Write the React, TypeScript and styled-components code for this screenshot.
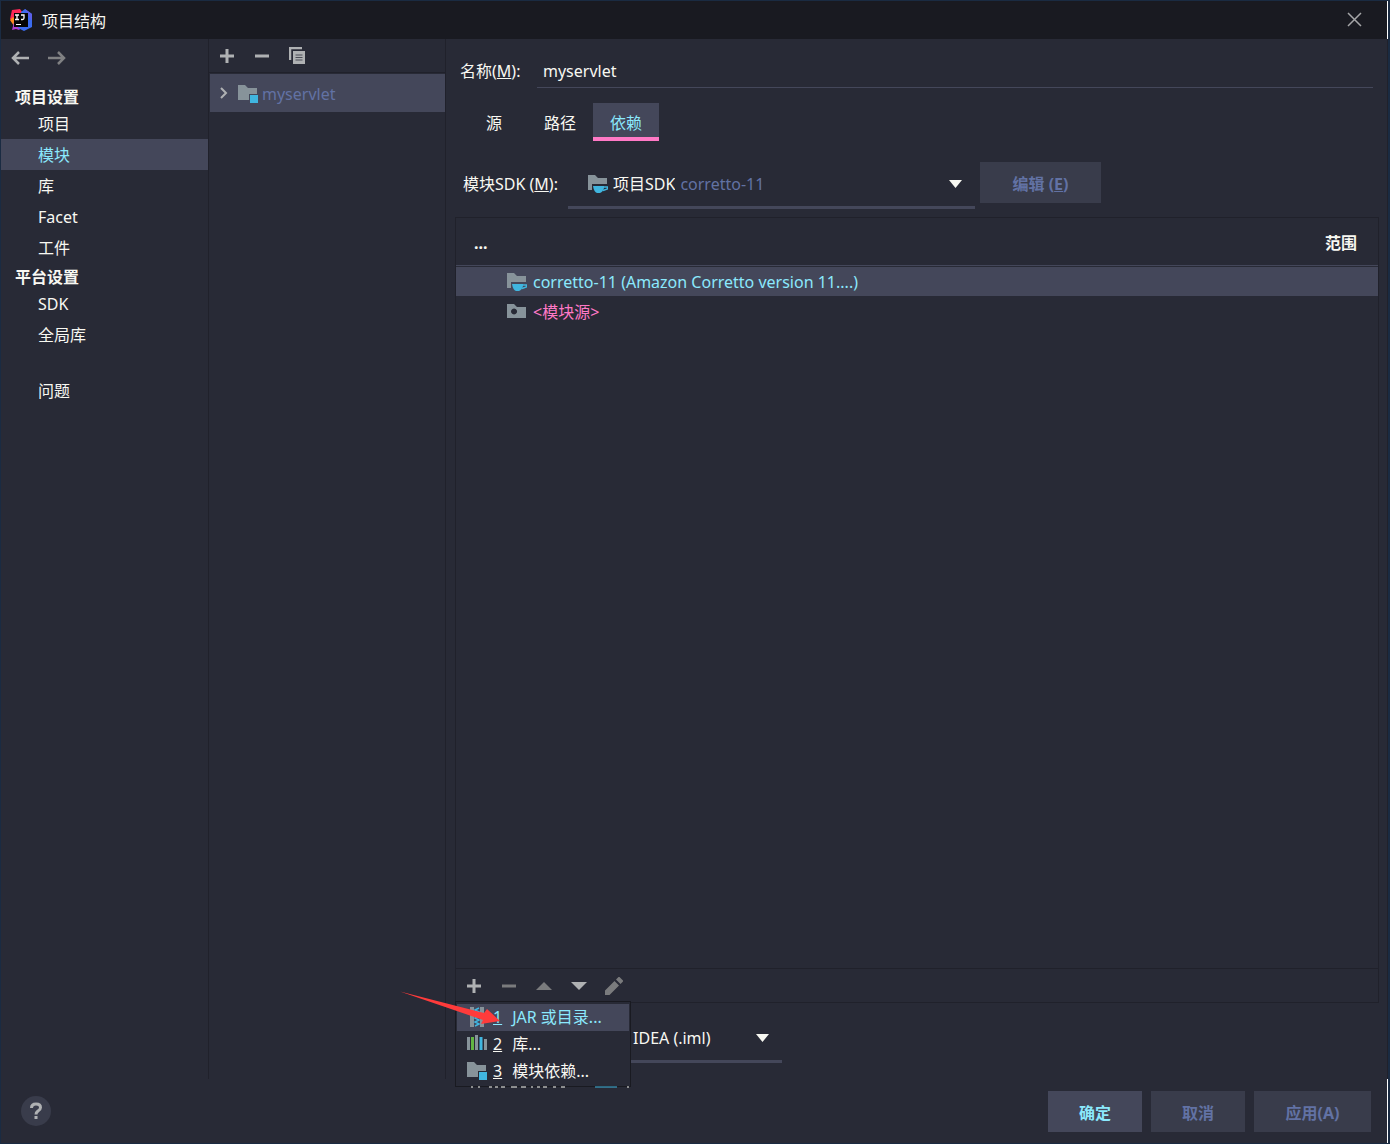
import React from 'react';
import styled, { createGlobalStyle, css } from 'styled-components';

const c = {
  bg: '#282a36',
  title: '#191a21',
  select: '#44475a',
  line: '#20212b',
  fg: '#f8f8f2',
  cyan: '#8be9fd',
  pink: '#ff79c6',
  muted: '#6272a4',
  button: '#393c4b',
  icon: '#afb1b3',
  iconOff: '#7a7b7d',
  folder: '#87939a',
  blue: '#40b6e0',
  edge: '#1a2b42',
};

const GlobalStyle = createGlobalStyle`
  *, *::before, *::after { box-sizing: border-box; }
  body { margin: 0; background: ${c.bg}; }
  body, button, input, select {
    font-family: "Noto Sans", "Noto Sans CJK SC", sans-serif;
    font-size: 16px;
    line-height: 24px;
    color: ${c.fg};
  }
`;

const plainButton = css`
  border: 0;
  padding: 0;
  background: none;
  cursor: pointer;
`;

const Window = styled.div`
  display: flex;
  flex-direction: column;
  min-height: 100vh;
  border: 1px solid ${c.edge};
  border-right-width: 2px;
`;

const TitleBar = styled.header`
  display: flex;
  align-items: center;
  height: 38px;
  padding: 0 22px 0 8px;
  gap: 9px;
  background: ${c.title};
  border-right: 1px solid #fff;
`;

const Title = styled.h1`
  flex: 1;
  margin: 0;
  padding-top: 2px;
  font-size: 16px;
  font-weight: 400;
`;

const CloseButton = styled.button`
  ${plainButton}
  display: flex;
`;

const Body = styled.div`
  display: flex;
  flex: 1;
  border-right: 1px solid ${c.line};
`;

const Sidebar = styled.nav`
  width: 208px;
  border-right: 1px solid ${c.line};
`;

const History = styled.div`
  display: flex;
  gap: 17px;
  height: 44px;
  padding: 9px 0 0 9px;
`;

const HistoryButton = styled.button`
  ${plainButton}
  width: 20px;
  height: 20px;
`;

const NavHeading = styled.h2`
  height: 25px;
  margin: 0;
  padding: 2px 0 0 14px;
  font-size: 16px;
  line-height: 24px;
  font-weight: 700;
`;

const NavList = styled.ul<{ $spaced?: boolean }>`
  list-style: none;
  margin: ${(p) => (p.$spaced ? '25px 0 0' : '0')};
  padding: 0;
`;

const NavLink = styled.a<{ $active?: boolean }>`
  display: block;
  height: 31px;
  padding-left: 37px;
  line-height: 33px;
  text-decoration: none;
  color: ${(p) => (p.$active ? c.cyan : c.fg)};
  background: ${(p) => (p.$active ? c.select : 'none')};
`;

const Modules = styled.section`
  width: 237px;
  border-right: 1px solid ${c.line};
`;

const Toolbar = styled.div<{ $bottom?: boolean }>`
  position: relative;
  display: flex;
  height: 34px;
  border: 0 solid ${c.line};
  border-width: ${(p) => (p.$bottom ? '1px 0 0' : '0 0 1px')};
`;

const ToolButton = styled.button`
  ${plainButton}
  display: flex;
  align-items: center;
  justify-content: center;
  width: 35px;
`;

const ModuleRow = styled.button`
  ${plainButton}
  display: flex;
  align-items: center;
  width: 100%;
  height: 40px;
  padding: 2px 0 0 10px;
  border: 1px solid ${c.bg};
  border-right: 0;
  background: ${c.select};
  color: ${c.muted};
  svg { margin-bottom: 2px; }
  svg + svg { margin: 0 4px 0 10px; }
`;

const Main = styled.main`
  display: flex;
  flex: 1;
  flex-direction: column;
  min-width: 0;
  padding: 15px 8px 16px 9px;
`;

const NameRow = styled.div`
  display: flex;
  height: 34px;
  padding: 0 6px 0 5px;
`;

const Label = styled.label<{ $width: number }>`
  width: ${(p) => p.$width}px;
  flex-shrink: 0;
  line-height: 34px;
  white-space: nowrap;
`;

const NameInput = styled.input`
  flex: 1;
  min-width: 0;
  padding: 0 6px;
  border: 0;
  border-bottom: 1px solid ${c.select};
  background: none;
  outline: none;
`;

const Tabs = styled.div`
  display: flex;
  margin-top: 15px;
  padding-left: 6px;
`;

const Tab = styled.button<{ $active?: boolean }>`
  ${plainButton}
  width: 66px;
  height: 38px;
  padding-top: 5px;
  border-bottom: 4px solid ${(p) => (p.$active ? c.pink : 'transparent')};
  color: ${(p) => (p.$active ? c.cyan : c.fg)};
  background: ${(p) => (p.$active ? c.select : 'none')};
`;

const FieldRow = styled.div<{ $top: number; $indent: number }>`
  display: flex;
  align-items: flex-start;
  margin-top: ${(p) => p.$top}px;
  padding-left: ${(p) => p.$indent}px;
  ${Label} { line-height: 44px; }
`;

const Combo = styled.div<{ $width: number }>`
  display: flex;
  align-items: center;
  width: ${(p) => p.$width}px;
  height: 47px;
  padding: 0 13px 0 20px;
  border-bottom: 3px solid ${c.select};
`;

const ComboSelect = styled.select<{ $grow?: boolean }>`
  appearance: none;
  field-sizing: content;
  flex: ${(p) => (p.$grow ? '1' : '0 0 auto')};
  min-width: 0;
  margin: 0;
  padding: 0;
  border: 0;
  background: none;
  outline: none;
`;

const ComboNote = styled.span`
  flex: 1;
  padding-left: 5px;
  color: ${c.muted};
`;

const Button = styled.button<{ $primary?: boolean; $width: number }>`
  ${plainButton}
  width: ${(p) => p.$width}px;
  height: 41px;
  padding-top: 3px;
  font-weight: 700;
  color: ${(p) => (p.$primary ? c.cyan : c.muted)};
  background: ${(p) => (p.$primary ? c.select : c.button)};
`;

const FieldGap = styled.div`
  width: 5px;
`;

const Panel = styled.div`
  display: flex;
  flex: 1;
  flex-direction: column;
  margin-top: 8px;
  border: 1px solid ${c.line};
`;

const TableArea = styled.div`
  flex: 1;
`;

const Table = styled.table`
  width: 100%;
  border-collapse: separate;
  border-spacing: 0;
  text-align: left;
`;

const Th = styled.th<{ $end?: boolean }>`
  height: 48px;
  padding: ${(p) => (p.$end ? '3px 21px 0 0' : '3px 0 0 18px')};
  text-align: ${(p) => (p.$end ? 'right' : 'left')};
  border-bottom: 1px solid ${c.select};
`;

const Row = styled.tr<{ $selected?: boolean; $color: string }>`
  color: ${(p) => p.$color};
  td {
    height: 30px;
    padding: 0;
    border-top: 1px solid ${c.bg};
    background: ${(p) => (p.$selected ? c.select : 'none')};
    background-clip: padding-box;
  }
`;

const Cell = styled.div`
  display: flex;
  align-items: center;
  gap: 6px;
  padding-left: 51px;
`;

const Menu = styled.ul`
  position: absolute;
  top: 32px;
  left: -1px;
  z-index: 2;
  width: 176px;
  margin: 0;
  padding: 2px 1px 1px;
  list-style: none;
  border: 1px solid ${c.title};
  background: ${c.bg};
`;

const MenuItem = styled.button<{ $active?: boolean }>`
  ${plainButton}
  display: flex;
  align-items: center;
  width: 100%;
  height: 27px;
  padding: 0 0 1px 10px;
  color: ${(p) => (p.$active ? c.cyan : c.fg)};
  background: ${(p) => (p.$active ? c.select : 'none')};
  u { margin: 0 10px 0 6px; }
`;

const Peek = styled.svg`
  position: absolute;
  top: 100%;
  left: 15px;
`;

const Arrow = styled.svg`
  position: absolute;
  top: 21px;
  left: -57px;
  z-index: 3;
  pointer-events: none;
`;

const Footer = styled.footer`
  display: flex;
  align-items: center;
  gap: 9px;
  height: 64px;
  padding: 0 16px 0 20px;
  border-right: 1px solid #fff;
`;

const HelpButton = styled.button`
  ${plainButton}
  width: 30px;
  height: 30px;
  margin-right: auto;
  border-radius: 50%;
  background: ${c.button};
  svg { display: block; }
`;

const Logo = () => (
  <svg width="24" height="24" viewBox="0 0 24 24">
    <path d="M3 2l8-1 5 7-9 7-6-4z" fill="#fe2857" />
    <path d="M1 12l3-3 4 4-3 5z" fill="#ff8a1d" />
    <path d="M3 22l2-8 8 5-3 3-3-1z" fill="#af3fd1" />
    <path d="M12 4l4-3 7 5v13l-8 4-6-3z" fill="#3b6cf0" />
    <path d="M16 1l7 5v7l-5-7z" fill="#5b5fe8" />
    <path d="M5 5h14v14H5z" fill="#050505" />
    <path d="M6 7h4M8 7v5M6 11.500h4M12 7h3v3q0 1.500-1.500 1.500H12" stroke="#fff" strokeWidth="1.300" fill="none" />
    <path d="M7 16.500h5" stroke="#fff" strokeWidth="1" />
  </svg>
);

const ArrowIcon = ({ back }: { back?: boolean }) => (
  <svg width="20" height="20" viewBox="0 0 20 20" fill="none" strokeWidth="2.500" stroke={back ? c.icon : '#808183'}>
    <path d={back ? 'M19 10H3M9 4l-6 6 6 6' : 'M1 10h16M11 4l6 6-6 6'} />
  </svg>
);

const PlusIcon = () => (
  <svg width="14" height="14" viewBox="0 0 14 14" stroke={c.icon} strokeWidth="3">
    <path d="M7 0v14M0 7h14" />
  </svg>
);

const MinusIcon = ({ off }: { off?: boolean }) => (
  <svg width="14" height="14" viewBox="0 0 14 14" stroke={off ? c.iconOff : c.icon} strokeWidth="3">
    <path d="M0 7h14" />
  </svg>
);

const CopyIcon = () => (
  <svg width="16" height="18" viewBox="0 0 16 18">
    <path d="M13 1H1v12" stroke={c.icon} strokeWidth="2.500" fill="none" />
    <path d="M4 4h12v13H4z" fill={c.icon} />
    <path d="M6.500 8h7M6.500 10.500h7M6.500 13h7" stroke="#4b4d57" strokeWidth="1" />
  </svg>
);

type Badge = 'module' | 'cup' | 'dot';

const FolderIcon = ({ badge }: { badge: Badge }) => (
  <svg width="20" height="20" viewBox="0 0 20 20">
    {badge === 'dot' ? (
      <path fillRule="evenodd" d="M0 2h7l3 3h9v11H0zM7 6.500a3 3 0 1 0 .1 0z" fill={c.folder} />
    ) : (
      <path d={badge === 'cup' ? 'M0 1h7l3 3h9v6H4v6H0z' : 'M0 1h7l3 3h9v6h-8v6H0z'} fill={c.folder} />
    )}
    {badge === 'module' && <path d="M12 11h8v8h-8z" fill={c.blue} />}
    {badge === 'cup' && (
      <>
        <path d="M5 12h11v2q-1 4-4 5H9Q6 18 5 12z" fill={c.blue} />
        <path d="M16 13h3.500v2L15 16.500" stroke={c.blue} strokeWidth="1.500" fill="none" />
      </>
    )}
  </svg>
);

const Caret = ({ size = 13, up, color = c.fg }: { size?: number; up?: boolean; color?: string }) => (
  <svg width={size} height="8" viewBox="0 0 16 8" preserveAspectRatio="none">
    <path d={up ? 'M0 8h16L8 0z' : 'M0 0h16L8 8z'} fill={color} />
  </svg>
);

const PencilIcon = () => (
  <svg width="18" height="18" viewBox="0 0 18 18" fill={c.iconOff}>
    <path d="M0 18v-4.500L9.500 4l4.500 4.500L4.500 18zM11 2.500L13.500 0h1L18 3.500v1L15.500 7z" />
  </svg>
);

const ArchiveIcon = () => (
  <svg width="20" height="20" viewBox="0 0 20 20">
    <path d="M3 0h4v20H3zM13 0h4v20h-4z" fill={c.folder} />
    <path d="M12 1L8 3l4 2-4 2 4 2-4 2 4 2-4 2 4 2-4 2" stroke={c.blue} strokeWidth="1.500" fill="none" />
  </svg>
);

const LibraryIcon = () => (
  <svg width="20" height="20" viewBox="0 0 20 20">
    <path d="M0 3h3v13H0zM8 1h3v15H8zM17 5h3v11h-3z" fill={c.folder} />
    <path d="M4 3h3v13H4z" fill="#62b543" />
    <path d="M12.500 3h3v13h-3z" fill={c.blue} />
  </svg>
);

const projectItems = ['项目', '模块', '库', 'Facet', '工件'];
const platformItems = ['SDK', '全局库'];

const NavGroup = ({ items, spaced }: { items: string[]; spaced?: boolean }) => (
  <NavList $spaced={spaced}>
    {items.map((item) => (
      <li key={item}>
        <NavLink href="#" $active={item === '模块'}>{item}</NavLink>
      </li>
    ))}
  </NavList>
);

const menuItems = [
  { icon: <ArchiveIcon />, text: 'JAR 或目录...' },
  { icon: <LibraryIcon />, text: '库...' },
  { icon: <FolderIcon badge="module" />, text: '模块依赖...' },
];

export default function App() {
  return (
    <>
      <GlobalStyle />
      <Window>
        <TitleBar>
          <Logo />
          <Title>项目结构</Title>
          <CloseButton aria-label="关闭">
            <svg width="20" height="20" viewBox="0 0 20 20" stroke="#a5a6a8" strokeWidth="1.500">
              <path d="M3 3l13 13M16 3L3 16" />
            </svg>
          </CloseButton>
        </TitleBar>

        <Body>
          <Sidebar>
            <History>
              <HistoryButton aria-label="后退"><ArrowIcon back /></HistoryButton>
              <HistoryButton aria-label="前进"><ArrowIcon /></HistoryButton>
            </History>
            <NavHeading>项目设置</NavHeading>
            <NavGroup items={projectItems} />
            <NavHeading>平台设置</NavHeading>
            <NavGroup items={platformItems} />
            <NavGroup items={['问题']} spaced />
          </Sidebar>

          <Modules>
            <Toolbar>
              <ToolButton aria-label="添加"><PlusIcon /></ToolButton>
              <ToolButton aria-label="移除"><MinusIcon /></ToolButton>
              <ToolButton aria-label="复制"><CopyIcon /></ToolButton>
            </Toolbar>
            <ModuleRow>
              <svg width="8" height="12" viewBox="0 0 8 12" fill="none" stroke={c.icon} strokeWidth="2">
                <path d="M1 1l5 5-5 5" />
              </svg>
              <FolderIcon badge="module" />
              myservlet
            </ModuleRow>
          </Modules>

          <Main>
            <NameRow>
              <Label htmlFor="name" $width={77}>名称(<u>M</u>):</Label>
              <NameInput id="name" defaultValue="myservlet" />
            </NameRow>

            <Tabs role="tablist">
              <Tab role="tab">源</Tab>
              <Tab role="tab">路径</Tab>
              <Tab role="tab" aria-selected $active>依赖</Tab>
            </Tabs>

            <FieldRow $top={21} $indent={8}>
              <Label htmlFor="sdk" $width={105}>模块SDK (<u>M</u>):</Label>
              <Combo $width={407}>
                <FolderIcon badge="cup" />
                <FieldGap />
                <ComboSelect id="sdk">
                  <option>项目SDK</option>
                </ComboSelect>
                <ComboNote>corretto-11</ComboNote>
                <Caret />
              </Combo>
              <FieldGap />
              <Button $width={121}>编辑 (<u>E</u>)</Button>
            </FieldRow>

            <Panel>
              <TableArea>
                <Table>
                  <thead>
                    <tr>
                      <Th>...</Th>
                      <Th $end>范围</Th>
                    </tr>
                  </thead>
                  <tbody>
                    <Row $selected $color={c.cyan}>
                      <td colSpan={2}>
                        <Cell><FolderIcon badge="cup" />corretto-11 (Amazon Corretto version 11....)</Cell>
                      </td>
                    </Row>
                    <Row $color={c.pink}>
                      <td colSpan={2}>
                        <Cell><FolderIcon badge="dot" />&lt;模块源&gt;</Cell>
                      </td>
                    </Row>
                  </tbody>
                </Table>
              </TableArea>
              <Toolbar $bottom>
                <ToolButton aria-label="添加"><PlusIcon /></ToolButton>
                <ToolButton aria-label="移除"><MinusIcon off /></ToolButton>
                <ToolButton aria-label="上移"><Caret size={16} up color={c.iconOff} /></ToolButton>
                <ToolButton aria-label="下移"><Caret size={16} color={c.icon} /></ToolButton>
                <ToolButton aria-label="编辑"><PencilIcon /></ToolButton>
                <Menu>
                  {menuItems.map((item, i) => (
                    <li key={item.text}>
                      <MenuItem $active={i === 0}>{item.icon}<u>{i + 1}</u>{item.text}</MenuItem>
                    </li>
                  ))}
                  <Peek width="160" height="2" viewBox="0 0 160 2">
                    <path d="M0 1h2M7 1h2M18 1h3M24 1h3M30 1h4M40 1h6M50 1h5M60 1h2M66 1h3M72 1h4M82 1h3M90 1h4M156 1h2" stroke={c.fg} strokeWidth="1" />
                    <path d="M124 1h22" stroke={c.blue} strokeWidth="1" />
                  </Peek>
                </Menu>
                <Arrow width="104" height="38" viewBox="0 0 104 38">
                  <path d="M1 1.500L85 23l3-4 13 12-19 3 2-4z" fill="#ff3b3b" />
                </Arrow>
              </Toolbar>
            </Panel>

            <FieldRow $top={13} $indent={107}>
              <Combo $width={220}>
                <ComboSelect aria-label="存储格式" $grow>
                  <option>IntelliJ IDEA (.iml)</option>
                </ComboSelect>
                <Caret />
              </Combo>
            </FieldRow>
          </Main>
        </Body>

        <Footer>
          <HelpButton aria-label="帮助">
            <svg width="30" height="30" viewBox="0 0 30 30" fill="none" stroke={c.icon} strokeWidth="3">
              <path d="M10.500 12q0-4 4.500-4t4.500 3.500q0 2-2.500 3.500-2 1.500-2 3.500M15 20v3" />
            </svg>
          </HelpButton>
          <Button $primary $width={94}>确定</Button>
          <Button $width={94}>取消</Button>
          <Button $width={117}>应用(A)</Button>
        </Footer>
      </Window>
    </>
  );
}
